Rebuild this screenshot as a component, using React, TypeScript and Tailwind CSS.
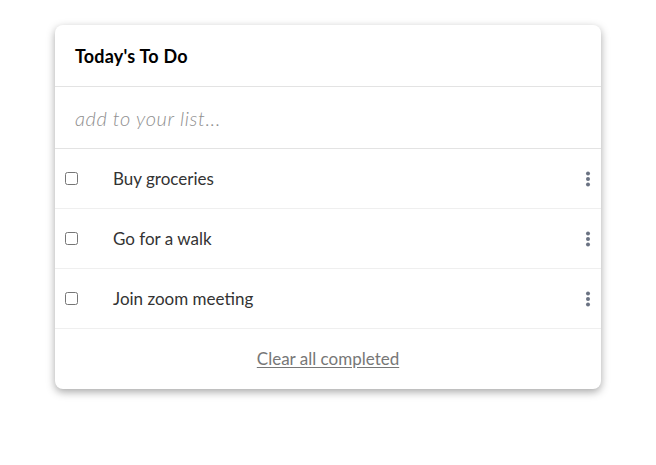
import React from 'react';

const todos = ['Buy groceries', 'Go for a walk', 'Join zoom meeting'];

const Kebab: React.FC = () => (
  <svg width="6" height="18" viewBox="0 0 6 18" className="text-gray-500">
    <circle cx="3" cy="3.5" r="2" fill="currentColor" />
    <circle cx="3" cy="9" r="2" fill="currentColor" />
    <circle cx="3" cy="14.5" r="2" fill="currentColor" />
  </svg>
);

export default function App() {
  return (
    <div className="min-h-[465px] bg-white pt-[25px] pl-[55px] font-['Lato','Open_Sans',sans-serif]">
      <div className="w-[546px] rounded-lg bg-white shadow-[0_3px_8px_rgba(0,0,0,0.35)] overflow-hidden">
        {/* header */}
        <div className="h-[62px] flex items-center px-5 pt-[2px] border-b border-[#e3e3e3]">
          <h1 className="text-[18px] font-bold text-black tracking-[0.2px]">Today's To Do</h1>
        </div>

        {/* input */}
        <div className="h-[62px] flex items-center px-5 border-b border-[#e3e3e3]">
          <input
            autoFocus
            placeholder="add to your list..."
            className="w-full outline-none text-[20px] tracking-[0.6px] italic font-light text-gray-700 placeholder:text-[#8f8f8f] caret-black"
          />
        </div>

        {/* list */}
        <ul>
          {todos.map((t) => (
            <li key={t} className="h-[60px] flex items-center border-b border-[#efefef] pl-[10px] pr-[10px]">
              <input type="checkbox" className="w-[13px] h-[13px] m-0" />
              <span className="ml-[35px] text-[17px] text-[#333] flex-1">{t}</span>
              <Kebab />
            </li>
          ))}
        </ul>

        {/* footer */}
        <div className="h-[60px] flex items-center justify-center">
          <button className="text-[17px] text-[#777] underline underline-offset-2">Clear all completed</button>
        </div>
      </div>
    </div>
  );
}
